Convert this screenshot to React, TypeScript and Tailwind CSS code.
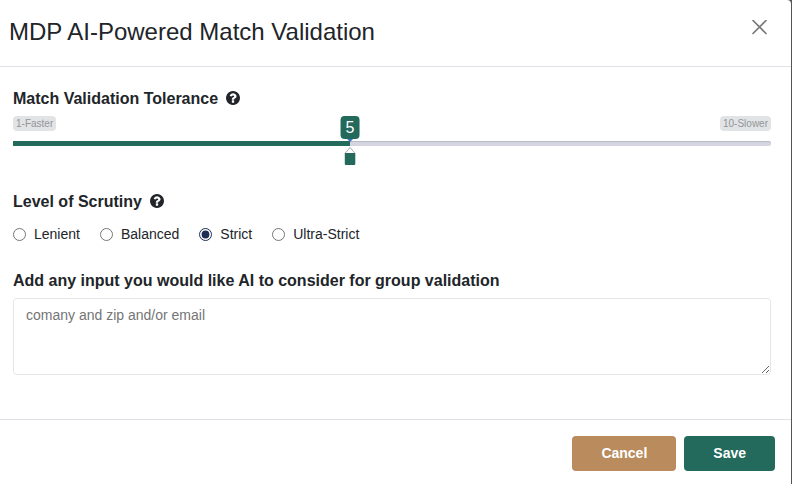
import { useState } from "react";

const MIN = 1;
const MAX = 10;
const LEVELS = ["Lenient", "Balanced", "Strict", "Ultra-Strict"];

function HelpButton({ label }: { label: string }) {
  return (
    <button type="button" aria-label={label} className="pb-0.5">
      <svg width="14" height="14" viewBox="0 0 1536 1536" fill="currentColor">
        <path d="M896 1248v-192q0-14-9-23t-23-9h-192q-14 0-23 9t-9 23v192q0 14 9 23t23 9h192q14 0 23-9t9-23zM1152 576q0-88-55.5-163t-138.5-116-170-41q-243 0-371 213-15 24 8 42l132 100q7 6 19 6 16 0 25-12 53-68 86-92 34-24 86-24 48 0 85.5 26t37.5 59q0 38-20 61t-68 45q-63 28-115.5 86.5t-52.5 125.5v36q0 14 9 23t23 9h192q14 0 23-9t9-23q0-19 21.5-49.5t54.5-49.5q32-18 49-28.5t46-35 44.5-48 28-60.5 12.5-81zM1536 768q0 209-103 385.5t-279.5 279.5-385.5 103-385.5-103-279.5-279.5-103-385.5 103-385.5 279.5-279.5 385.5-103 385.5 103 279.5 279.5 103 385.5z" />
      </svg>
    </button>
  );
}

function ToleranceSlider({ value, onChange }: { value: number; onChange: (v: number) => void }) {
  const percent = ((value - MIN) / (MAX - MIN)) * 100;

  return (
    <div className="relative pb-5">
      <div className="flex justify-between pb-2.5 text-[10px] leading-[15px] text-[#929699]">
        <span className="rounded bg-[#e2e3e5] px-[3px]">1-Faster</span>
        <span className="rounded bg-[#e2e3e5] px-[3px]">10-Slower</span>
      </div>
      <div className="overflow-hidden rounded-r-full bg-[#d5d5e2] inset-shadow-[0_1px_0_#b9bac8]">
        <div className="h-[5px] bg-[#236a5c]" style={{ width: `${percent}%` }} />
      </div>

      {/* Value bubble over the track, pointer under it */}
      <div
        className="pointer-events-none absolute top-0 flex -translate-x-1/2 flex-col items-center"
        style={{ left: `${percent}%` }}
      >
        <output
          htmlFor="tolerance"
          className="rounded bg-[#236a5c] px-[5px] text-base leading-[23px] text-white"
        >
          {value}
        </output>
        <svg width="11" height="26" viewBox="0 0 11 26" fill="none">
          <path d="M2.5 0h6l-3 3z" fill="#3b74c4" />
          <path d="M.5 14.500 5.500 8.500l5 6" fill="#fff" stroke="#a9aabb" />
          <path d="M0 14h11v10.500q0 1.500-1.500 1.500h-8q-1.500 0-1.500-1.500z" fill="#236a5c" />
        </svg>
      </div>

      <input
        id="tolerance"
        type="range"
        min={MIN}
        max={MAX}
        value={value}
        onChange={(e) => onChange(Number(e.target.value))}
        className="absolute inset-x-0 bottom-0 h-8 w-full cursor-pointer opacity-0"
      />
    </div>
  );
}

export default function App() {
  const [tolerance, setTolerance] = useState(5);
  const [level, setLevel] = useState("Strict");
  const [notes, setNotes] = useState("");

  return (
    <div className="min-h-screen bg-[#555]">
      <form
        role="dialog"
        aria-labelledby="dialog-title"
        className="mr-px flex min-h-screen flex-col rounded-tr bg-white font-['Liberation_Sans',Arial,sans-serif] text-sm text-[#212529]"
        onSubmit={(e) => e.preventDefault()}
      >
        <header className="flex items-start justify-between border-b border-[#dee2e6] px-2 pt-4 pb-4">
          <h1 id="dialog-title" className="pl-px text-2xl leading-[32px]">
            MDP AI-Powered Match Validation
          </h1>
          <div className="flex h-[34px] items-start pr-3">
            <button type="button" aria-label="Close" className="p-1 text-[#7a7a7a]">
              <svg width="15" height="15" viewBox="0 0 15 15" fill="none" stroke="currentColor" strokeWidth="1.7" strokeLinecap="round">
                <path d="m1 .5 13 13M14 .5l-13 13" />
              </svg>
            </button>
          </div>
        </header>

        <main className="flex-1 pt-5 pr-5 pb-11 pl-[13px]">
          <section>
            <div className="flex items-center gap-2 pb-[5px]">
              <label htmlFor="tolerance" className="text-base font-bold">
                Match Validation Tolerance
              </label>
              <HelpButton label="About tolerance" />
            </div>
            <ToleranceSlider value={tolerance} onChange={setTolerance} />
          </section>

          <section role="radiogroup" aria-labelledby="level-label" className="pt-6">
            <div className="flex items-center gap-2 pb-2.5">
              <h2 id="level-label" className="text-base font-bold">Level of Scrutiny</h2>
              <HelpButton label="About scrutiny levels" />
            </div>
            <div className="flex flex-wrap gap-5">
              {LEVELS.map((name) => (
                <label key={name} className="flex items-center gap-2">
                  <input
                    type="radio"
                    name="level"
                    checked={level === name}
                    onChange={() => setLevel(name)}
                    className="size-[13px] accent-[#1f2f55]"
                  />
                  {name}
                </label>
              ))}
            </div>
          </section>

          <section className="flex flex-col gap-[5px] pt-[25px]">
            <label htmlFor="notes" className="text-base font-bold">
              Add any input you would like AI to consider for group validation
            </label>
            <textarea
              id="notes"
              value={notes}
              onChange={(e) => setNotes(e.target.value)}
              placeholder="comany and zip and/or email"
              className="h-[77px] w-full rounded border border-[#e4e6e9] px-3 py-1.5 placeholder:text-[#757575]"
            />
          </section>
        </main>

        <footer className="flex justify-end gap-2 border-t border-[#dee2e6] pt-4 pr-4 pb-[13px] font-bold text-white">
          <button type="button" className="rounded bg-[#b98b5d] px-[29px] leading-[35px]">
            Cancel
          </button>
          <button type="submit" className="rounded bg-[#236a5c] px-[29px] leading-[35px]">
            Save
          </button>
        </footer>
      </form>
    </div>
  );
}
